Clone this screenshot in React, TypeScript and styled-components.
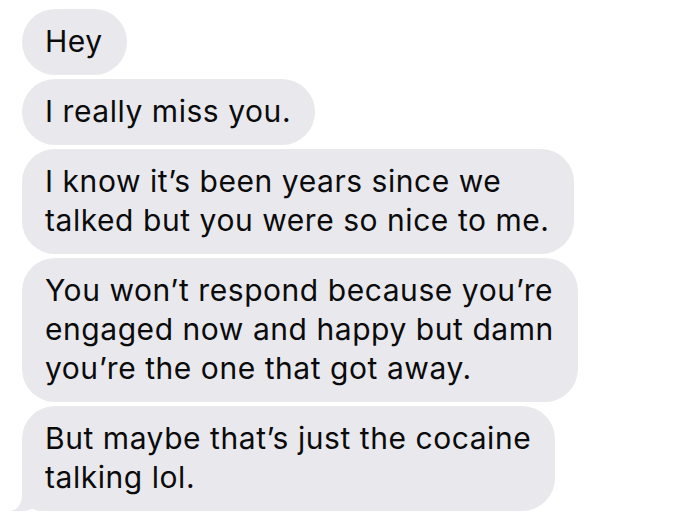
import React from "react";
import styled, { createGlobalStyle } from "styled-components";

const GlobalStyle = createGlobalStyle`
  html, body {
    margin: 0;
    padding: 0;
    background: #ffffff;
  }
`;

const Thread = styled.div`
  display: flex;
  flex-direction: column;
  align-items: flex-start;
  gap: 4px;
  padding: 9px 0 0 22px;
  width: 700px;
  height: 526px;
  box-sizing: border-box;
  overflow: hidden;
`;

const Bubble = styled.div<{ $tail?: boolean }>`
  position: relative;
  background: #e8e8ed;
  color: #0b0b0b;
  font-family: "Inter", "Liberation Sans", sans-serif;
  font-size: 30px;
  line-height: 39px;
  letter-spacing: 0.55px;
  padding: 13px 24px 14px 23px;
  border-radius: 33px;
  white-space: pre;

  ${(p) =>
    p.$tail &&
    `
    border-bottom-left-radius: 20px;
    &::before {
      content: "";
      position: absolute;
      left: -12px;
      bottom: 0;
      width: 30px;
      height: 20px;
      background: #e8e8ed;
      border-bottom-right-radius: 18px 14px;
    }
    &::after {
      content: "";
      position: absolute;
      left: -18px;
      bottom: 0;
      width: 18px;
      height: 20px;
      background: #ffffff;
      border-bottom-right-radius: 12px 16px;
    }
  `}
`;

const messages = [
  "Hey",
  "I really miss you.",
  "I know it\u2019s been years since we\ntalked but you were so nice to me.",
  "You won\u2019t respond because you\u2019re\nengaged now and happy but damn\nyou\u2019re the one that got away.",
  "But maybe that\u2019s just the cocaine\ntalking lol.",
];

export default function App() {
  return (
    <>
      <GlobalStyle />
      <Thread>
        {messages.map((text, i) => (
          <Bubble key={i} $tail={i === messages.length - 1}>
            {text}
          </Bubble>
        ))}
      </Thread>
    </>
  );
}
